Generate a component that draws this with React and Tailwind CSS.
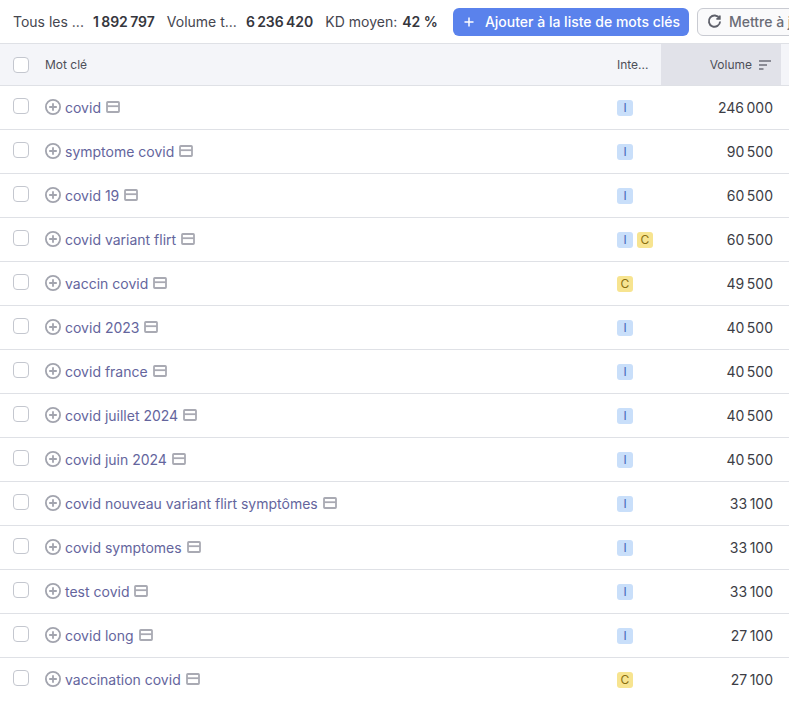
const rows = [
  ["covid", ["I"], "246\u2009000"],
  ["symptome covid", ["I"], "90\u2009500"],
  ["covid 19", ["I"], "60\u2009500"],
  ["covid variant flirt", ["I", "C"], "60\u2009500"],
  ["vaccin covid", ["C"], "49\u2009500"],
  ["covid 2023", ["I"], "40\u2009500"],
  ["covid france", ["I"], "40\u2009500"],
  ["covid juillet 2024", ["I"], "40\u2009500"],
  ["covid juin 2024", ["I"], "40\u2009500"],
  ["covid nouveau variant flirt symptômes", ["I"], "33\u2009100"],
  ["covid symptomes", ["I"], "33\u2009100"],
  ["test covid", ["I"], "33\u2009100"],
  ["covid long", ["I"], "27\u2009100"],
  ["vaccination covid", ["C"], "27\u2009100"],
];

function PlusCircle() {
  return (
    <svg width="16" height="16" viewBox="0 0 16 16" fill="none" stroke="#a2a4ae" strokeWidth="1.8" className="shrink-0">
      <circle cx="8" cy="8" r="7.1" />
      <path d="M8 4.2v7.6M4.2 8h7.6" />
    </svg>
  );
}

function Serp() {
  return (
    <svg width="14" height="12" viewBox="0 0 14 12" fill="none" stroke="#a9aab3" strokeWidth="1.8" className="shrink-0">
      <rect x="1" y="1" width="12" height="10" rx="0.8" />
      <path d="M1 5.2h12" />
    </svg>
  );
}

function Check() {
  return <span className="block w-4 h-4 rounded-[4px] border border-[#c4c7cf] bg-white shrink-0" />;
}

function Badge({ k }) {
  const cls = k === "I" ? "bg-[#c9dffa] text-[#4867b8]" : "bg-[#f7e490] text-[#8a6f10]";
  return <span className={`flex items-center justify-center w-4 h-4 rounded-[3px] text-xs font-normal leading-none ${cls}`}>{k}</span>;
}

export default function App() {
  return (
    <div className="w-[789px] h-[701px] overflow-hidden bg-white text-[#35363d] text-sm font-['Inter',sans-serif]">
      <div className="h-[44px] flex items-center pl-[13px] whitespace-nowrap border-b border-[#dfe1e6]">
        <span className="text-[#45464f]">Tous les ...</span>
        <span className="ml-[9px] font-semibold">{"1\u2009892\u2009797"}</span>
        <span className="ml-3 text-[#45464f]">Volume t...</span>
        <span className="ml-[9px] font-semibold">{"6\u2009236\u2009420"}</span>
        <span className="ml-3 text-[#45464f]">KD moyen:</span>
        <span className="ml-[5px] font-semibold">42 %</span>
        <button className="ml-[15px] h-7 w-[236px] pl-[10px] flex items-center justify-start gap-[10px] rounded-md bg-[#5a82ec] text-white font-medium shrink-0">
          <svg width="12" height="12" viewBox="0 0 12 12" stroke="#fff" strokeWidth="1.5"><path d="M6 1.5v9M1.5 6h9" /></svg>
          Ajouter à la liste de mots clés
        </button>
        <button className="ml-2 h-7 pl-[9px] pr-3 shrink-0 flex items-center gap-[7px] rounded-md border border-[#c9cbd2] bg-[#fafafb] text-[#6a6c76] font-medium">
          <svg width="15" height="15" viewBox="0 0 16 16" fill="none" stroke="#5f616b" strokeWidth="2"><path d="M13.2 4.6A6 6 0 1 0 14 8" /><path d="M13.6 1.6v3.6H10" /></svg>
          Mettre à jour
        </button>
      </div>
      <div className="h-[42px] flex bg-[#f4f5f9] border-b border-[#dfe1e6] text-xs text-[#4e4f58]">
        <div className="w-[45px] pl-[13px] flex items-center shrink-0"><Check /></div>
        <div className="w-[572px] flex items-center shrink-0">Mot clé</div>
        <div className="w-[44px] flex items-center shrink-0">Inte...</div>
        <div className="w-[120px] bg-[#e1e2e9] flex items-center justify-end gap-[6px] pr-[9px] shrink-0">
          Volume
          <svg width="14" height="10" viewBox="0 0 14 10" fill="none" stroke="#6d6f79" strokeWidth="1.4"><path d="M1 1h12M1 5h8M1 9h4.5" /></svg>
        </div>
      </div>
      {rows.map(([kw, tags, vol]) => (
        <div key={kw} className="h-[44px] flex border-b border-[#dfe1e6]">
          <div className="w-[45px] pl-[13px] pt-3 shrink-0"><Check /></div>
          <div className="w-[572px] flex items-center shrink-0 pb-[1px]">
            <PlusCircle />
            <span className="ml-1 mt-[2px] text-[#64659d]">{kw}</span>
            <span className="ml-[5px] flex"><Serp /></span>
          </div>
          <div className="w-[60px] flex items-center gap-[4px] shrink-0">
            {tags.map((t) => <Badge key={t} k={t} />)}
          </div>
          <div className="flex-1 flex items-center justify-end pr-[16px] text-[#3c3d45]">{vol}</div>
        </div>
      ))}
    </div>
  );
}
